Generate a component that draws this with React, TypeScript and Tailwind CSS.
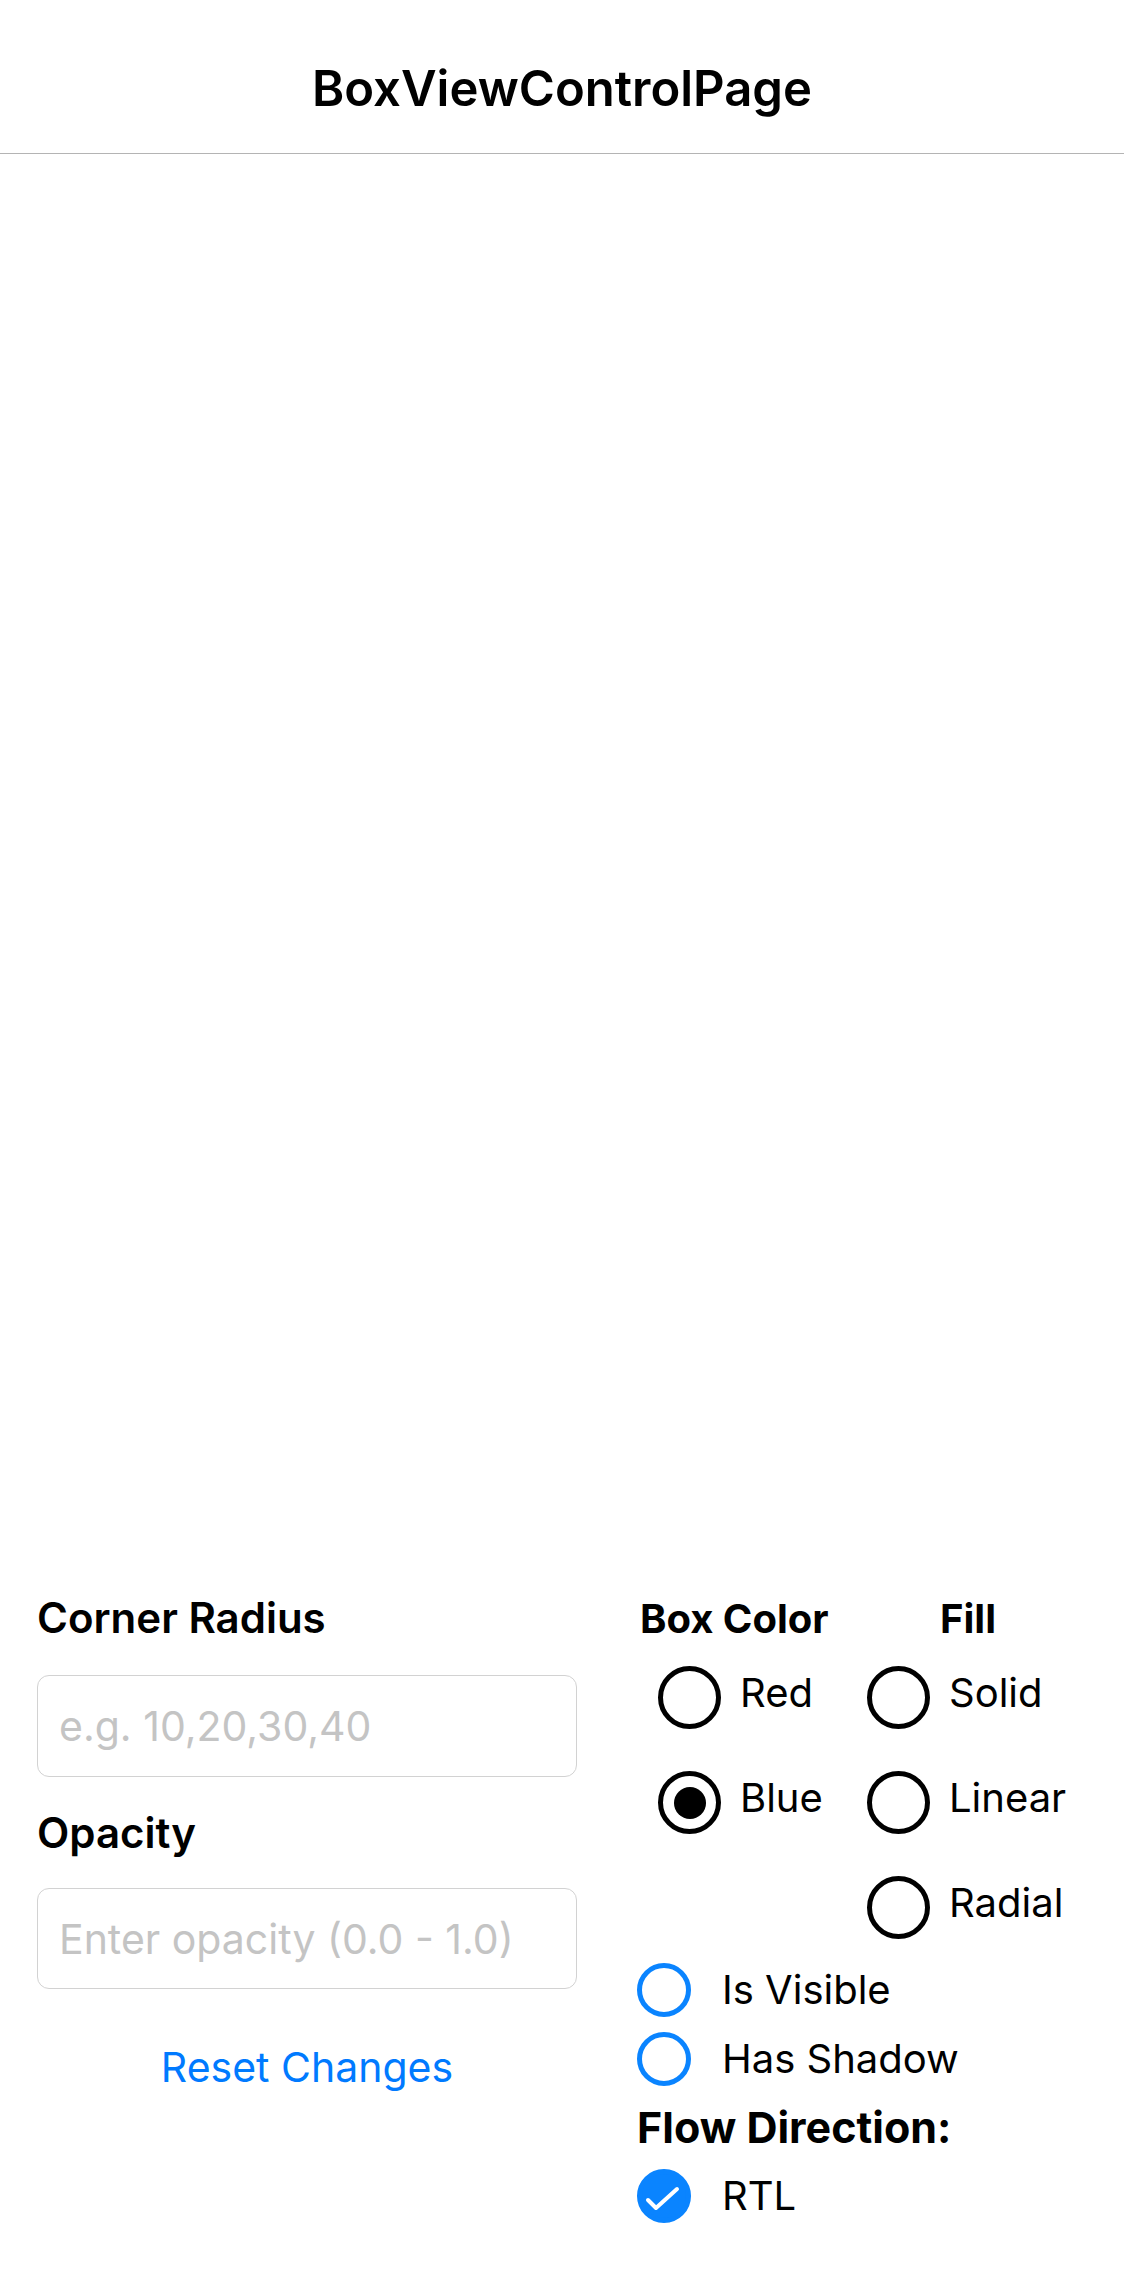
import React, { useState } from 'react'

const COLORS = ["Red", "Blue"];
const FILLS = ["Solid", "Linear", "Radial"];

const Radio = ({ label, checked, onClick }: { label: string; checked: boolean; onClick: () => void }) => (
  <button onClick={onClick} className="flex items-center h-[105px]">
    <span className="w-[63px] h-[63px] rounded-full border-[5px] border-black flex items-center justify-center">
      {checked && <span className="w-[32px] h-[32px] rounded-full bg-black" />}
    </span>
    <span className="ml-[19px] mb-[10px] text-[40px] leading-none">{label}</span>
  </button>
);

const Check = ({ label, checked, onClick }: { label: string; checked: boolean; onClick: () => void }) => (
  <button onClick={onClick} className="flex items-center h-[60px]">
    <span
      className={`w-[54px] h-[54px] rounded-full border-[5px] border-[#0A84FF] flex items-center justify-center ${checked ? "bg-[#0A84FF]" : ""}`}
    >
      {checked && (
        <svg width="54" height="54" viewBox="0 0 54 54" className="shrink-0">
          <path d="M11 31 L19 39 L40 20" fill="none" stroke="white" strokeWidth="4" strokeLinecap="round" strokeLinejoin="round" />
        </svg>
      )}
    </span>
    <span className="ml-[31px] text-[40px] leading-none">{label}</span>
  </button>
);

export default function App() {
  const [color, setColor] = useState("Blue");
  const [fill, setFill] = useState("");
  const [visible, setVisible] = useState(false);
  const [shadow, setShadow] = useState(false);
  const [rtl, setRtl] = useState(true);

  return (
    <div className="w-full min-h-[2286px] bg-white text-black font-['Inter',sans-serif]">
      {/* Nav bar */}
      <div className="h-[154px] pt-[24px] flex items-center justify-center border-b border-[#b4b4b4]">
        <h1 className="text-[49px] font-semibold leading-none">BoxViewControlPage</h1>
      </div>

      {/* Box canvas (empty) */}
      <div className="h-[1443px]" />

      {/* Controls */}
      <div className="flex pl-[37px]">
        <div className="w-[540px] flex flex-col">
          <p className="text-[42px] font-semibold leading-none">Corner Radius</p>
          <input
            placeholder="e.g. 10,20,30,40"
            className="mt-[36px] h-[102px] w-full rounded-[12px] border border-[#d2d2d2] pl-[21px] text-[41px] outline-none placeholder:text-[#c4c4c4]"
          />
          <p className="mt-[35px] text-[42px] font-semibold leading-none">Opacity</p>
          <input
            placeholder="Enter opacity (0.0 - 1.0)"
            className="mt-[34px] h-[101px] w-full rounded-[12px] border border-[#d2d2d2] pl-[21px] text-[41px] outline-none placeholder:text-[#c4c4c4]"
          />
          <button className="mt-[58px] text-[41px] leading-none text-[#007AFF] self-center">Reset Changes</button>
        </div>

        <div className="ml-[60px] pt-[2px] flex flex-col">
          <div className="flex">
            <div className="w-[227px] flex flex-col">
              <p className="pl-[3px] text-[40px] font-bold leading-none">Box Color</p>
              <div className="mt-[6px] pl-[21px] flex flex-col items-start">
                {COLORS.map((c) => (
                  <Radio key={c} label={c} checked={color === c} onClick={() => setColor(c)} />
                ))}
              </div>
            </div>
            <div className="flex flex-col">
              <p className="pl-[76px] text-[40px] font-bold leading-none">Fill</p>
              <div className="mt-[6px] pl-[3px] flex flex-col items-start">
                {FILLS.map((f) => (
                  <Radio key={f} label={f} checked={fill === f} onClick={() => setFill(f)} />
                ))}
              </div>
            </div>
          </div>

          <div className="flex flex-col items-start gap-[9px]">
            <Check label="Is Visible" checked={visible} onClick={() => setVisible(!visible)} />
            <Check label="Has Shadow" checked={shadow} onClick={() => setShadow(!shadow)} />
          </div>

          <p className="mt-[17px] text-[43px] font-bold leading-none">Flow Direction:</p>
          <div className="mt-[17px]">
            <Check label="RTL" checked={rtl} onClick={() => setRtl(!rtl)} />
          </div>
        </div>
      </div>
    </div>
  )
}
